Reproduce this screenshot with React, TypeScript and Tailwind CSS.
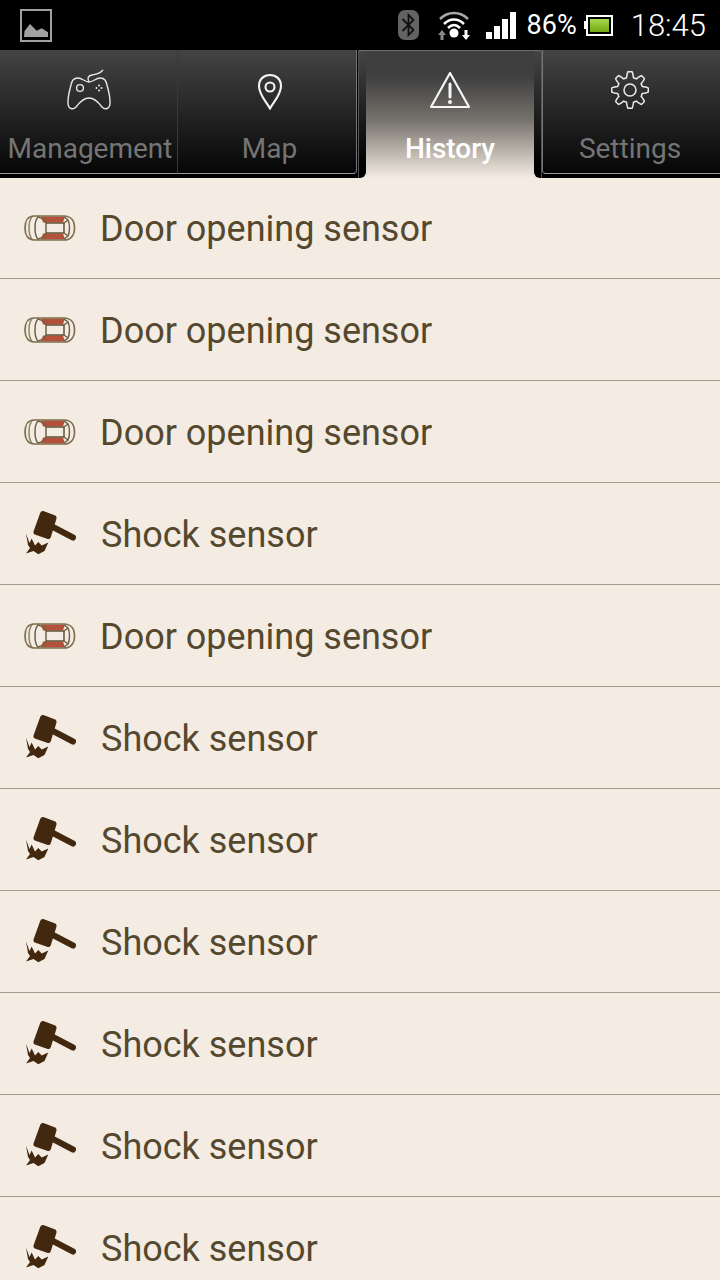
import React from "react";

const Door = () => (
  <svg width="52" height="26" viewBox="0 0 52 26" fill="none" aria-hidden="true">
    <path d="M17 1.500 H41 L39 7.500 H19 Z" fill="#b5503a" />
    <path d="M17 24.500 H41 L39 18.500 H19 Z" fill="#b5503a" />
    <path d="M10 1 H40 C47 1 50.500 6 50.500 13 C50.500 20 47 25 40 25 H10 C4 25 1 20 1 13 C1 6 4 1 10 1 Z" stroke="#7d6e4e" strokeWidth="1.700" />
    <path d="M8 2 C4 6 4 20 8 24" stroke="#8f8264" strokeWidth="1.500" />
    <path d="M14 2 C18 3 21 6 22 8 V18 C21 20 18 23 14 24 C10 20 10 6 14 2 Z" stroke="#6f6146" strokeWidth="1.500" />
    <path d="M22 8 H40 V18 H22" stroke="#5f5238" strokeWidth="1.500" />
    <path d="M40 2 L44 5 C46 9 46 17 44 21 L40 24 M40 8 L44 5 M40 18 L44 21" stroke="#6f6146" strokeWidth="1.500" />
  </svg>
);

const Hammer = () => (
  <svg className="-mt-[1px]" width="52" height="46" viewBox="0 0 52 46" aria-hidden="true">
    <path d="M19 4 L29.500 8 L24 26 L12.500 22 Z" fill="#42280f" stroke="#42280f" strokeWidth="6" strokeLinejoin="round" />
    <path d="M28 16.500 L49 27.500" stroke="#42280f" strokeWidth="6" strokeLinecap="round" />
    <path d="M2 23.500 L5.500 33 L7.700 28.500 L11 35.500 L14.300 32 L17.700 35.500 L24.300 32.500 L20.500 41 L14.300 44.300 L9.500 41 L2 43.500 L6 38 L4 35 Z" fill="#42280f" />
  </svg>
);

const Row = ({ type }: { type: "door" | "shock" }) => (
  <div className="flex h-[102px] shrink-0 items-center border-b border-[#a39a8a] pl-[24px]">
    <div className="flex w-[52px] shrink-0 items-center justify-center">{type === "door" ? <Door /> : <Hammer />}</div>
    <span className={`pt-[2px] text-[36px] leading-none text-[#54482e] ${type === "door" ? "ml-[24px]" : "ml-[25px]"}`}>
      {type === "door" ? "Door opening sensor" : "Shock sensor"}
    </span>
  </div>
);

const Gamepad = () => (
  <svg width="46" height="42" viewBox="0 0 46 42" fill="none" stroke="#e8e8e8" strokeWidth="1.400" aria-hidden="true">
    <path d="M11 9 C6 9 5 12 4 16 C2 23 0.800 31 1 35 C1.500 40 6 41 9 38 C12 34 16 29 22 29 C28 29 32 34 35 38 C38 41 42.500 40 43 35 C43.200 31 42 23 40 16 C39 12 38 9 33 9 C29 9 26 13 22 13 C18 13 15 9 11 9 Z" />
    <path d="M22 13 C20 9 21 7 25 6 C30 5 33 5 36 0.800" />
    <circle cx="13" cy="19" r="3.400" />
    <circle cx="32" cy="16.500" r="1" fill="#e8e8e8" stroke="none" />
    <circle cx="32" cy="21.500" r="1" fill="#e8e8e8" stroke="none" />
    <circle cx="29.500" cy="19" r="1" fill="#e8e8e8" stroke="none" />
    <circle cx="34.500" cy="19" r="1" fill="#e8e8e8" stroke="none" />
  </svg>
);

const Pin = () => (
  <svg width="26" height="40" viewBox="0 0 26 40" fill="none" stroke="#f4f4f4" strokeWidth="2.100" aria-hidden="true">
    <path d="M13 38.500 C9 31 2 25 2 16 C2 9 7 5 13 5 C19 5 24 9 24 16 C24 25 17 31 13 38.500 Z" />
    <circle cx="13" cy="17" r="4.500" />
  </svg>
);

const Warn = () => (
  <svg width="42" height="38" viewBox="0 0 42 38" fill="none" aria-hidden="true">
    <path d="M21 2 L40 36 H2 Z" stroke="#f6f6f6" strokeWidth="2.200" strokeLinejoin="round" />
    <path d="M21 13 V26" stroke="#f6f6f6" strokeWidth="3" strokeLinecap="round" />
    <circle cx="21" cy="31" r="2" fill="#f6f6f6" />
  </svg>
);

const gearPoints = Array.from({ length: 160 }, (_, i) => {
  const t = (i / 160) * Math.PI * 2;
  const c = Math.max(-1, Math.min(1, 1.700 * Math.cos(8 * t)));
  const r = 15.500 + 2.800 * c;
  return `${(19 + r * Math.sin(t)).toFixed(2)},${(19 - r * Math.cos(t)).toFixed(2)}`;
}).join(" ");

const Gear = () => (
  <svg width="38" height="38" viewBox="0 0 38 38" fill="none" stroke="#ececec" strokeWidth="1.500" aria-hidden="true">
    <polygon points={gearPoints} strokeLinejoin="round" />
    <circle cx="19" cy="19" r="6" />
  </svg>
);

const Tab = ({ label, icon, active, cls }: { label: string; icon: React.ReactNode; active?: boolean; cls: string }) => (
  <div className={cls}>
    <div className="flex h-[40px] items-center justify-center">{icon}</div>
    <div className={`mt-[22px] text-[28px] leading-[34px] ${active ? "font-medium text-white" : "text-[#757575]"}`}>{label}</div>
  </div>
);

const StatusBar = () => (
  <div className="flex h-[50px] shrink-0 items-center bg-black pl-[20px] pr-[14px]">
    <svg width="32" height="33" viewBox="0 0 32 33" fill="none" aria-hidden="true">
      <rect x="1" y="1" width="30" height="31" stroke="#a0a0a0" strokeWidth="2" />
      <path d="M4 28 L4.500 22 L10 15 L16.700 21.700 L21.700 19.300 L28 23.300 V28 Z" fill="#a0a0a0" />
    </svg>
    <div className="ml-auto flex items-center">
      <svg width="21" height="30" viewBox="0 0 21 30" aria-hidden="true">
        <rect x="0" y="0" width="21" height="30" rx="7" fill="#636363" />
        <path d="M4.500 9 L15.500 20 L10.500 25 V5 L15.500 10 L4.500 21" stroke="#111" strokeWidth="1.800" fill="none" />
      </svg>
      <svg className="ml-[19px]" width="32" height="30" viewBox="0 0 32 30" fill="none" aria-hidden="true">
        <path d="M2 9 C10 1 22 1 30 9" stroke="#aaa" strokeWidth="2.500" />
        <path d="M6 14 C12 8 20 8 26 14" stroke="#fff" strokeWidth="2.500" />
        <path d="M10 18 C14 14 18 14 22 18" stroke="#fff" strokeWidth="2.500" />
        <circle cx="16" cy="23" r="4.500" fill="#fff" />
        <path d="M4 20 L8 25 H5.500 V30 H2.500 V25 H0 Z" fill="#888" />
        <path d="M28 30 L24 25 H26.500 V20 H29.500 V25 H32 Z" fill="#fff" />
      </svg>
      <div className="ml-[16px] flex h-[28px] items-end gap-[2px]">
        <div className="h-[7px] w-[6px] bg-white" />
        <div className="h-[13px] w-[6px] bg-white" />
        <div className="h-[20px] w-[6px] bg-white" />
        <div className="h-[27px] w-[6px] bg-white" />
      </div>
      <span className="ml-[11px] text-[27px] leading-none text-white">86%</span>
      <div className="ml-[7px] flex items-center">
        <div className="h-[8px] w-[2px] bg-white" />
        <div className="flex h-[21px] w-[27px] items-center border-2 border-white bg-black p-[2px]">
          <div className="h-full w-full bg-[linear-gradient(to_bottom,#a8d84e,#72a814)]" />
        </div>
      </div>
      <span className="ml-[18px] text-[31px] leading-none font-light text-white">18:45</span>
    </div>
  </div>
);

export default function App() {
  const rows: ("door" | "shock")[] = ["door", "door", "door", "shock", "door", "shock", "shock", "shock", "shock", "shock", "shock"];
  return (
    <div className="flex h-[1280px] w-[720px] flex-col overflow-hidden bg-[#f4ece2] font-['Roboto',sans-serif]">
      <StatusBar />
      <div className="flex h-[128px] shrink-0 bg-black text-center">
        <Tab label="Management" icon={<Gamepad />} cls="h-[124px] w-[178px] border-r border-b border-r-[#3a3a3a] border-b-[#999999] bg-[linear-gradient(to_bottom,#444444,#060606)] pt-[20px] pl-[3px]" />
        <Tab label="Map" icon={<Pin />} cls="h-[124px] w-[179px] rounded-br-[4px] border-r border-b border-r-[#777777] border-b-[#999999] bg-[linear-gradient(to_bottom,#444444,#060606)] pt-[20px] pl-[5px]" />
        <div className="ml-[1px] flex h-[128px] w-[184px] overflow-hidden rounded-t-[3px] bg-[#f4ece2]">
          <div className="w-[8px] rounded-br-[6px] border-t border-l border-[#6e6e6e] border-l-[#555] bg-[linear-gradient(to_bottom,#444444,#000000_90%)]" />
          <div className="flex-1 border-t border-[#6e6e6e] bg-[linear-gradient(to_bottom,#3f3f3f_0%,#3f3f3f_20%,#77736d_55%,#f4ece2_100%)] pt-[19px]">
            <Tab label="History" active icon={<Warn />} cls="" />
          </div>
          <div className="w-[8px] rounded-bl-[6px] border-t border-r border-[#6e6e6e] border-r-[#555] bg-[linear-gradient(to_bottom,#444444,#000000_90%)]" />
        </div>
        <Tab label="Settings" icon={<Gear />} cls="h-[124px] flex-1 rounded-bl-[4px] border-b border-l border-l-[#777777] border-b-[#999999] bg-[linear-gradient(to_bottom,#444444,#060606)] pt-[20px] pr-[3px]" />
      </div>
      <div className="flex flex-col">
        {rows.map((r, i) => (
          <div key={i} className={i === 0 ? "-mt-[1px]" : ""}>
            <Row type={r} />
          </div>
        ))}
      </div>
    </div>
  );
}
